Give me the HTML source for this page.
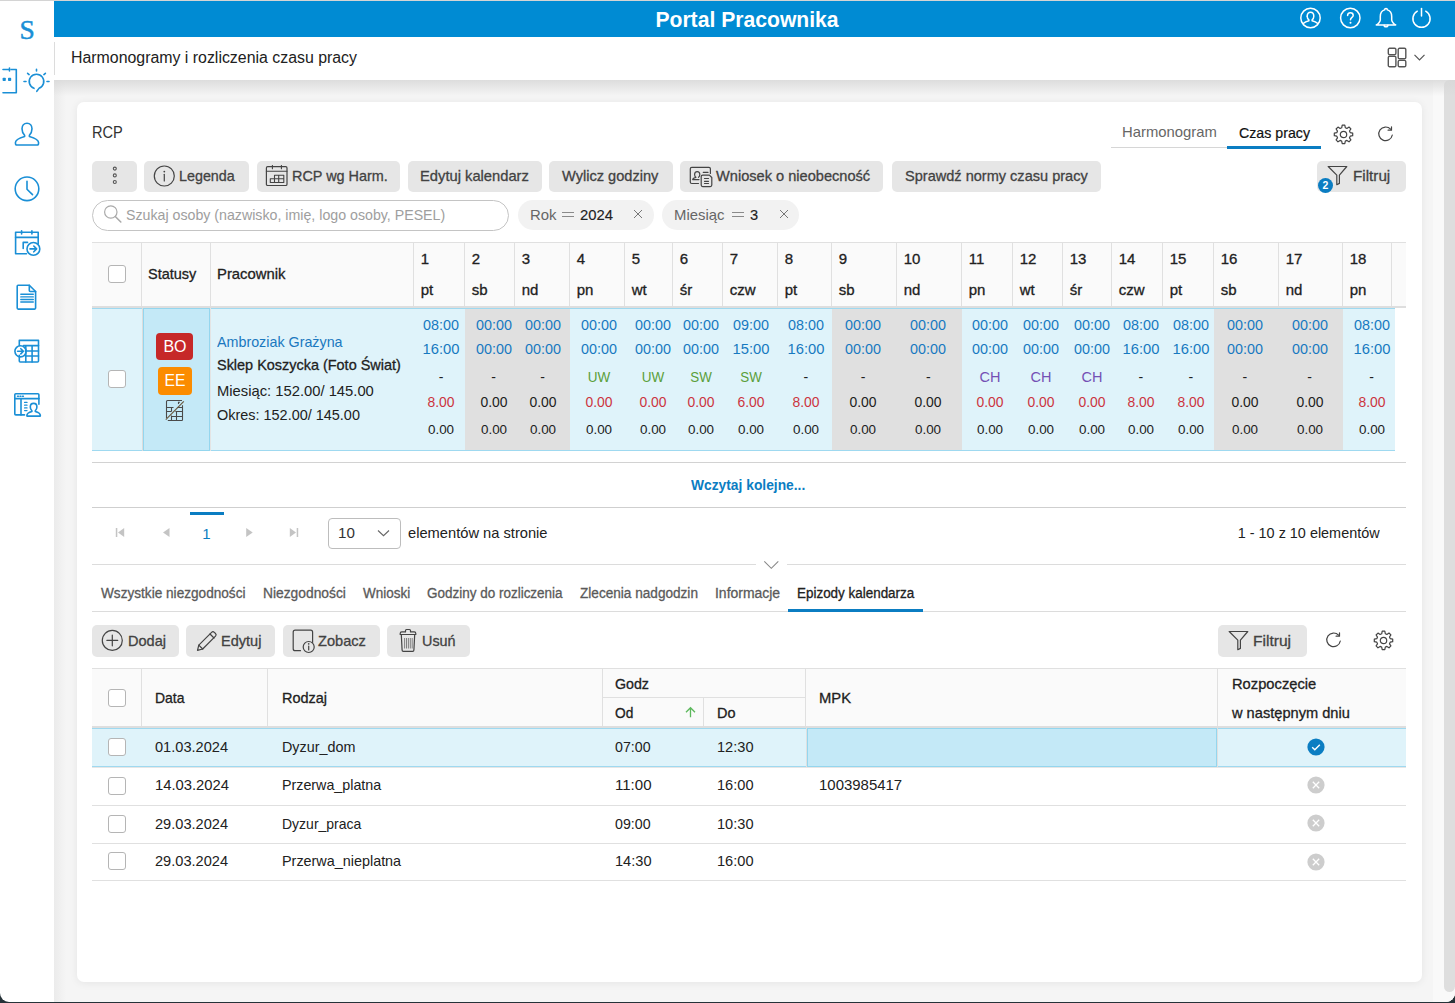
<!DOCTYPE html>
<html><head><meta charset="utf-8"><title>Portal Pracownika</title>
<style>
html,body{margin:0;padding:0;}
body{width:1455px;height:1003px;overflow:hidden;position:relative;background:#263238;font-family:"Liberation Sans", sans-serif;}
.t{position:absolute;line-height:1;white-space:nowrap;}
.t span{white-space:nowrap;}
</style></head><body>
<div style="position:absolute;left:0;top:0;width:1455px;height:1002px;background:#fff;border-radius:0 0 9px 9px;overflow:hidden;"><div style="position:absolute;left:0px;top:0px;width:1455px;height:1px;background:#d4d4d4;"></div><div style="position:absolute;left:54px;top:80px;width:1401px;height:922px;background:#f5f5f5;"></div><div style="position:absolute;left:54px;top:80px;width:12px;height:922px;background:linear-gradient(90deg,#ebebeb,#f5f5f5);"></div><div style="position:absolute;left:54px;top:1px;width:1401px;height:36px;background:#008bd3;"></div><div style="position:absolute;left:54px;top:37px;width:1401px;height:43px;background:#fff;"></div><div style="position:absolute;left:54px;top:42px;width:1px;height:33px;background:#dcdcdc;"></div><div style="position:absolute;left:1433px;top:80px;width:22px;height:922px;background:#f9f9f9;"></div><div style="position:absolute;left:1444px;top:80px;width:11px;height:912px;background:#dedede;border-radius:6px 0 6px 6px;"></div><div style="position:absolute;left:54px;top:80px;width:1401px;height:16px;background:linear-gradient(rgba(215,215,215,0.8),rgba(215,215,215,0));"></div><div style="position:absolute;left:77px;top:102px;width:1345px;height:880px;background:#fff;border-radius:7px;box-shadow:0 1px 8px rgba(0,0,0,0.07);"></div><div id="t0" class="t" style="left:747px;width:0;display:flex;justify-content:center;top:9.00px;font-size:22px;font-weight:700;color:#fff;transform:scaleX(0.9606);transform-origin:center;"><span>Portal Pracownika</span></div><svg style="position:absolute;left:1299px;top:7px;" width="23" height="23" viewBox="0 0 23 23"><g stroke="#fff" stroke-width="1.5" fill="none" stroke-linecap="round" stroke-linejoin="round"><circle cx="11.5" cy="11" r="9.7"/><path d="M8.2 9.2c0-2.4 1.4-4 3.3-4s3.3 1.6 3.3 4c0 1.7-.8 3-1.7 3.6v.9c2.2.6 4.3 1.6 5.3 2.6"/><path d="M8.2 9.2c0 1.7.8 3 1.7 3.6v.9c-2.2.6-4.3 1.6-5.3 2.6"/></g></svg><svg style="position:absolute;left:1339px;top:7px;" width="23" height="23" viewBox="0 0 23 23"><g stroke="#fff" stroke-width="1.5" fill="none" stroke-linecap="round" stroke-linejoin="round"><circle cx="11.3" cy="11" r="9.7"/><path d="M8.6 8.6c0-1.7 1.2-2.8 2.8-2.8s2.8 1.1 2.8 2.6c0 1.9-2.7 2.2-2.7 4.4"/></g><circle cx="11.5" cy="15.8" r="1" fill="#fff"/></svg><svg style="position:absolute;left:1374px;top:6px;" width="24" height="23" viewBox="0 0 24 23"><g stroke="#fff" stroke-width="1.5" fill="none" stroke-linecap="round" stroke-linejoin="round"><path d="M12 2.5c.9 0 1.4.6 1.4 1.4 3 .8 4.3 3.4 4.3 6.6v3.6c0 1.6 2.7 4.2 4 4.9H2.3c1.3-.7 4-3.3 4-4.9v-3.6c0-3.2 1.3-5.8 4.3-6.6 0-.8.5-1.4 1.4-1.4z"/><path d="M10.1 19.2c0 1 .8 1.6 1.9 1.6s1.9-.6 1.9-1.6"/></g></svg><svg style="position:absolute;left:1410px;top:6px;" width="23" height="23" viewBox="0 0 23 23"><g stroke="#fff" stroke-width="1.5" fill="none" stroke-linecap="round" stroke-linejoin="round"><path d="M7.3 5.2A8.6 8.6 0 1 0 15.7 5.2"/><path d="M11.5 2.5v7.6"/></g></svg><div id="t1" class="t" style="left:70.78px;top:50.00px;font-size:16px;font-weight:400;color:#212121;transform:scaleX(0.9927);transform-origin:left;"><span>Harmonogramy i rozliczenia czasu pracy</span></div><svg style="position:absolute;left:1387px;top:47px;" width="21" height="21" viewBox="0 0 21 21"><g stroke="#555" stroke-width="1.4" fill="none" stroke-linejoin="round"><rect x="1.3" y="1.3" width="7.6" height="6.3" rx="1.3"/><rect x="1.3" y="9.2" width="7.6" height="10.5" rx="1.3"/><rect x="11.2" y="1.3" width="7.6" height="10.4" rx="1.3"/><rect x="11.2" y="13.4" width="7.6" height="6.3" rx="1.3"/></g></svg><svg style="position:absolute;left:1413px;top:53px;" width="14" height="9" viewBox="0 0 14 9"><path d="M1.5 1.8l5 5 5-5" stroke="#555" stroke-width="1.2" fill="none"/></svg><div style="position:absolute;left:19.5px;top:16px;font-family:'Liberation Serif',serif;font-size:27.5px;color:#1a8fd6;line-height:1;-webkit-text-stroke:0.5px #1a8fd6;">S</div><svg style="position:absolute;left:0px;top:66px;" width="52" height="30" viewBox="0 0 52 30"><g stroke="#1a8fd6" stroke-width="1.6" fill="none" stroke-linecap="round" stroke-linejoin="round"><path d="M3 3.5h6.5M11.2 3.5h5.1v23.2H3M9.5 2v3"/><rect x="3.4" y="12.6" width="1.6" height="1.6"/><rect x="8.8" y="12.6" width="1.6" height="1.6"/><path d="M34 22.36A7.3 7.3 0 1 1 39 22.36L36.8 25.3"/><path d="M36.5 3.3v1.6M27.6 7.3l1.5 1.3M45.4 7.3l-1.5 1.3M24 15.5h2M47 15.5h2"/></g></svg><svg style="position:absolute;left:13px;top:121px;" width="28" height="28" viewBox="0 0 28 28"><g stroke="#1a8fd6" stroke-width="1.6" fill="none" stroke-linecap="round" stroke-linejoin="round"><path d="M14 2.2c-3 0-5 2.3-5 5.6 0 2.7 1.2 5 2.6 6.4v1.3c-4.8 1.4-9.2 3-9.2 6.2 0 1 .3 2 .8 2.3h21.6c.5-.3.8-1.3.8-2.3 0-3.2-4.4-4.8-9.2-6.2v-1.3c1.4-1.4 2.6-3.7 2.6-6.4 0-3.3-2-5.6-5-5.6z"/></g></svg><svg style="position:absolute;left:13px;top:175px;" width="28" height="28" viewBox="0 0 28 28"><g stroke="#1a8fd6" stroke-width="1.6" fill="none" stroke-linecap="round" stroke-linejoin="round"><circle cx="14" cy="13.8" r="11.8"/><path d="M14 6.2v8l5.5 5.4"/></g></svg><svg style="position:absolute;left:13px;top:229px;" width="30" height="29" viewBox="0 0 30 29"><g stroke="#1a8fd6" stroke-width="1.6" fill="none" stroke-linecap="round" stroke-linejoin="round"><path d="M13.5 24.7H2.6V3.2h22.6v11.5"/><path d="M2.6 8.4h22.6M8.6 1.8v3.2M18.9 1.8v3.2"/><path d="M10.2 19.5V13.4h4.3"/><circle cx="20.4" cy="19.9" r="6.4"/><path d="M17 19.9h6.5M20.8 17l2.8 2.9-2.8 2.9"/></g></svg><svg style="position:absolute;left:15px;top:283px;" width="25" height="28" viewBox="0 0 25 28"><g stroke="#1a8fd6" stroke-width="1.6" fill="none" stroke-linecap="round" stroke-linejoin="round"><path d="M3 2.2h11.3l6.3 6.3v16.6c0 .6-.4 1-1 1H3.2c-.6 0-1-.4-1-1V3.2c0-.6.4-1 .8-1z"/><path d="M14.3 2.2v5.3c0 .6.4 1 1 1h5.3"/><path d="M5.8 11.2h12.5M5.8 13.9h12.5M5.8 16.5h12.5M5.8 19h12.5" stroke-width="1.4"/></g></svg><svg style="position:absolute;left:13px;top:338px;" width="29" height="26" viewBox="0 0 29 26"><g stroke="#1a8fd6" stroke-width="1.6" fill="none" stroke-linecap="round" stroke-linejoin="round"><path d="M6.3 7.5V2.4h19.2v20.6c0 .6-.4 1-1 1H7.3c-.6 0-1-.4-1-1v-5.6"/><path d="M10.5 7.6h15M12.3 13h13.2M12.3 18h13.2M12.8 7.6v16.4M19.1 7.6v16.4"/><circle cx="7.5" cy="13.3" r="5.6"/><path d="M4.6 13.3h5.6M7.8 10.7l2.6 2.6-2.6 2.6"/></g></svg><svg style="position:absolute;left:13px;top:392px;" width="30" height="28" viewBox="0 0 30 28"><g stroke="#1a8fd6" stroke-width="1.6" fill="none" stroke-linecap="round" stroke-linejoin="round"><path d="M11.5 22.9H2.8c-.6 0-1-.4-1-1V2.8c0-.6.4-1 1-1h22.1c.6 0 1 .4 1 1v9.5"/><path d="M1.8 6.6h24.1M8 6.6v16.3"/><path d="M4.5 4.2h.9M7 4.2h.9M9.5 4.2h.9" stroke-width="1.5"/><path d="M11.6 10.4h2.4M11.6 13.2h2.4M11.6 15.9h2.4M11.6 18.6h2.4" stroke-width="1.3"/><path d="M20.5 11.4c-1.9 0-3.2 1.5-3.2 3.5 0 1.7.7 3 1.6 3.9v.6c-2.6.7-5 1.7-5 3.8v.9h13.4v-.9c0-2.1-2.4-3.1-5-3.8v-.6c.9-.9 1.6-2.2 1.6-3.9 0-2-1.3-3.5-3.2-3.5z"/></g></svg><div id="t2" class="t" style="left:92.28px;top:125.00px;font-size:16px;font-weight:400;color:#333;transform:scaleX(0.9125);transform-origin:left;"><span>RCP</span></div><div style="position:absolute;left:1111px;top:147px;width:116px;height:1px;background:#d6d6d6;"></div><div style="position:absolute;left:1227px;top:146px;width:94px;height:2.5px;background:#0b7dc2;"></div><div id="t3" class="t" style="left:1121.55px;top:124.00px;font-size:15px;font-weight:400;color:#666;transform:scaleX(0.9897);transform-origin:left;"><span>Harmonogram</span></div><div id="t4" class="t" style="left:1238.75px;top:125.00px;font-size:15px;font-weight:400;color:#111;transform:scaleX(0.9467);transform-origin:left;-webkit-text-stroke:0.2px currentColor;"><span>Czas pracy</span></div><svg style="position:absolute;left:1333px;top:124px;" width="21" height="21" viewBox="0 0 21 21"><g stroke="#444" stroke-width="1.2" fill="none" stroke-linecap="round" stroke-linejoin="round"><path d="M9.2 1.2h2.6l.5 2.5 1.6.7 2.1-1.4 1.9 1.9-1.4 2.1.7 1.6 2.5.5v2.6l-2.5.5-.7 1.6 1.4 2.1-1.9 1.9-2.1-1.4-1.6.7-.5 2.5H9.2l-.5-2.5-1.6-.7-2.1 1.4-1.9-1.9 1.4-2.1-.7-1.6-2.5-.5V9.2l2.5-.5.7-1.6-1.4-2.1 1.9-1.9 2.1 1.4 1.6-.7z"/><circle cx="10.5" cy="10.5" r="3.2"/></g></svg><svg style="position:absolute;left:1377px;top:126px;" width="17" height="17" viewBox="0 0 17 17"><g stroke="#444" stroke-width="1.2" fill="none" stroke-linecap="round" stroke-linejoin="round"><path d="M13.6 3.2A6.8 6.8 0 1 0 15.3 9"/><path d="M14.5 .8v3.4h-3.4" /></g></svg><div style="position:absolute;left:92px;top:161px;width:45px;height:31px;background:#e6e6e6;border-radius:5px;"></div><svg style="position:absolute;left:110px;top:163px;" width="10" height="24" viewBox="0 0 10 24"><g stroke="#555" stroke-width="1.1" fill="none"><circle cx="4.8" cy="5.6" r="1.5"/><circle cx="4.8" cy="12.4" r="1.5"/><circle cx="4.8" cy="19" r="1.5"/></g></svg><div style="position:absolute;left:144px;top:161px;width:105px;height:31px;background:#e6e6e6;border-radius:5px;"></div><svg style="position:absolute;left:153px;top:165px;" width="23" height="23" viewBox="0 0 23 23"><g stroke="#444" stroke-width="1.2" fill="none" stroke-linecap="round" stroke-linejoin="round"><circle cx="11.3" cy="11" r="10"/><path d="M11.3 9.3v6.6"/></g><circle cx="11.3" cy="6.6" r=".9" fill="#444"/></svg><div id="t5" class="t" style="left:179.25px;top:168.00px;font-size:15px;font-weight:400;color:#424242;transform:scaleX(0.9543);transform-origin:left;-webkit-text-stroke:0.3px currentColor;"><span>Legenda</span></div><div style="position:absolute;left:257px;top:161px;width:143px;height:31px;background:#e6e6e6;border-radius:5px;"></div><svg style="position:absolute;left:265px;top:165px;" width="24" height="22" viewBox="0 0 24 22"><g stroke="#444" stroke-width="1.2" fill="none" stroke-linecap="round" stroke-linejoin="round"><rect x="1.4" y="1.6" width="20.6" height="18.9" rx="1.3"/><path d="M1.4 6.2h20.6M7.4 0.4v3.4M16.4 0.4v3.4M5.3 17.5V13.8H9.5V10.3H18.8V17.5zM5.3 13.8H18.8M9.5 13.8V17.5M13.7 10.3V17.5" stroke-width="1.1"/></g></svg><div id="t6" class="t" style="left:291.65px;top:168.00px;font-size:15px;font-weight:400;color:#424242;transform:scaleX(0.9607);transform-origin:left;-webkit-text-stroke:0.3px currentColor;"><span>RCP wg Harm.</span></div><div style="position:absolute;left:408px;top:161px;width:134px;height:31px;background:#e6e6e6;border-radius:5px;"></div><div id="t7" class="t" style="left:419.95px;top:168.00px;font-size:15px;font-weight:400;color:#424242;transform:scaleX(0.9818);transform-origin:left;-webkit-text-stroke:0.3px currentColor;"><span>Edytuj kalendarz</span></div><div style="position:absolute;left:549px;top:161px;width:124px;height:31px;background:#e6e6e6;border-radius:5px;"></div><div id="t8" class="t" style="left:561.95px;top:168.00px;font-size:15px;font-weight:400;color:#424242;transform:scaleX(0.9723);transform-origin:left;-webkit-text-stroke:0.3px currentColor;"><span>Wylicz godziny</span></div><div style="position:absolute;left:680px;top:161px;width:203px;height:31px;background:#e6e6e6;border-radius:5px;"></div><svg style="position:absolute;left:689px;top:165px;" width="25" height="23" viewBox="0 0 25 23"><g stroke="#444" stroke-width="1.2" fill="none" stroke-linecap="round" stroke-linejoin="round"><path d="M9.5 18.5H2.8c-.8 0-1.5-.7-1.5-1.5V3.8c0-.8.7-1.5 1.5-1.5h17.1c.8 0 1.5.7 1.5 1.5v4.7"/><path d="M6.9 12.3c-.9-.6-1.3-1.6-1.3-2.8 0-1.6 1.1-2.9 2.6-2.9s2.6 1.3 2.6 2.9c0 1.2-.4 2.2-1.3 2.8M6.9 12.3c-1.7.4-3.2 1.1-3.2 2.3h6.3M14.3 7.4h4.7"/><path d="M13.7 10.1h6.7l2.4 2.4v7.6c0 .8-.7 1.5-1.5 1.5h-7.6c-.8 0-1.5-.7-1.5-1.5v-8.5c0-.8.7-1.5 1.5-1.5z" fill="#e6e6e6"/><path d="M15.5 13.5h4M15.5 16.3h4M15.5 18.5h4"/></g></svg><div id="t9" class="t" style="left:716.15px;top:168.00px;font-size:15px;font-weight:400;color:#424242;transform:scaleX(0.9728);transform-origin:left;-webkit-text-stroke:0.3px currentColor;"><span>Wniosek o nieobecność</span></div><div style="position:absolute;left:892px;top:161px;width:209px;height:31px;background:#e6e6e6;border-radius:5px;"></div><div id="t10" class="t" style="left:904.75px;top:168.00px;font-size:15px;font-weight:400;color:#424242;transform:scaleX(0.9698);transform-origin:left;-webkit-text-stroke:0.3px currentColor;"><span>Sprawdź normy czasu pracy</span></div><div style="position:absolute;left:1317px;top:161px;width:89px;height:31px;background:#e6e6e6;border-radius:5px;"></div><svg style="position:absolute;left:1327px;top:165px;" width="22" height="22" viewBox="0 0 22 22"><g stroke="#444" stroke-width="1.2" fill="none" stroke-linecap="round" stroke-linejoin="round"><path d="M1.2 1.5h18.6l-7.4 8.6v8.3l-2.6 1.3v-9.6z"/></g></svg><div id="t11" class="t" style="left:1352.55px;top:168.00px;font-size:15px;font-weight:400;color:#424242;transform:scaleX(1.0161);transform-origin:left;-webkit-text-stroke:0.3px currentColor;"><span>Filtruj</span></div><div style="position:absolute;left:1317.9px;top:177.5px;width:15px;height:15px;border-radius:50%;background:#0b7dc2;color:#fff;font-size:10.5px;font-weight:700;line-height:15px;text-align:center;">2</div><div style="position:absolute;left:92px;top:200px;width:417px;height:31px;box-sizing:border-box;border:1px solid #c4c4c4;border-radius:16px;"></div><svg style="position:absolute;left:103px;top:204px;" width="20" height="20" viewBox="0 0 20 20"><g stroke="#aaa" stroke-width="1.2" fill="none" stroke-linecap="round"><circle cx="7.8" cy="8" r="6.2"/><path d="M12.3 12.5l5.5 5.5" stroke-width="1.6"/></g></svg><div id="t12" class="t" style="left:126.35px;top:207.00px;font-size:15px;font-weight:400;color:#9e9e9e;transform:scaleX(0.9461);transform-origin:left;"><span>Szukaj osoby (nazwisko, imię, logo osoby, PESEL)</span></div><div style="position:absolute;left:518px;top:200px;width:136px;height:30px;background:#f2f2f2;border-radius:15px;"></div><div id="t13" class="t" style="left:529.95px;top:207.00px;font-size:15px;font-weight:400;color:#666;transform:scaleX(0.9933);transform-origin:left;"><span>Rok</span></div><div style="position:absolute;left:562px;top:212px;width:11.5px;height:1px;background:#8a8a8a;"></div><div style="position:absolute;left:562px;top:216px;width:11.5px;height:1px;background:#8a8a8a;"></div><div id="t14" class="t" style="left:580.25px;top:207.00px;font-size:15px;font-weight:400;color:#222;transform:scaleX(0.9871);transform-origin:left;-webkit-text-stroke:0.15px currentColor;"><span>2024</span></div><svg style="position:absolute;left:632px;top:208px;" width="12" height="12" viewBox="0 0 12 12"><path d="M2 2l8 8M10 2l-8 8" stroke="#777" stroke-width="1"/></svg><div style="position:absolute;left:662px;top:200px;width:137px;height:30px;background:#f2f2f2;border-radius:15px;"></div><div id="t15" class="t" style="left:674.25px;top:207.00px;font-size:15px;font-weight:400;color:#666;transform:scaleX(0.9912);transform-origin:left;"><span>Miesiąc</span></div><div style="position:absolute;left:732px;top:212px;width:12px;height:1px;background:#8a8a8a;"></div><div style="position:absolute;left:732px;top:216px;width:12px;height:1px;background:#8a8a8a;"></div><div id="t16" class="t" style="left:750.45px;top:207.00px;font-size:15px;font-weight:400;color:#222;transform:scaleX(0.9750);transform-origin:left;-webkit-text-stroke:0.15px currentColor;"><span>3</span></div><svg style="position:absolute;left:777.5px;top:208px;" width="12" height="12" viewBox="0 0 12 12"><path d="M2 2l8 8M10 2l-8 8" stroke="#777" stroke-width="1"/></svg><div style="position:absolute;left:92px;top:242px;width:1314px;height:1px;background:#e0e0e0;"></div><div style="position:absolute;left:92px;top:243px;width:1314px;height:63px;background:#fafafa;"></div><div style="position:absolute;left:92px;top:306px;width:1314px;height:2px;background:#dedede;"></div><div style="position:absolute;left:141px;top:243px;width:1px;height:63px;background:#e0e0e0;"></div><div style="position:absolute;left:210px;top:243px;width:1px;height:63px;background:#e0e0e0;"></div><div style="position:absolute;left:413px;top:243px;width:1px;height:63px;background:#e0e0e0;"></div><div style="position:absolute;left:464px;top:243px;width:1px;height:63px;background:#e0e0e0;"></div><div style="position:absolute;left:514px;top:243px;width:1px;height:63px;background:#e0e0e0;"></div><div style="position:absolute;left:569px;top:243px;width:1px;height:63px;background:#e0e0e0;"></div><div style="position:absolute;left:624px;top:243px;width:1px;height:63px;background:#e0e0e0;"></div><div style="position:absolute;left:672px;top:243px;width:1px;height:63px;background:#e0e0e0;"></div><div style="position:absolute;left:722px;top:243px;width:1px;height:63px;background:#e0e0e0;"></div><div style="position:absolute;left:777px;top:243px;width:1px;height:63px;background:#e0e0e0;"></div><div style="position:absolute;left:831px;top:243px;width:1px;height:63px;background:#e0e0e0;"></div><div style="position:absolute;left:896px;top:243px;width:1px;height:63px;background:#e0e0e0;"></div><div style="position:absolute;left:961px;top:243px;width:1px;height:63px;background:#e0e0e0;"></div><div style="position:absolute;left:1012px;top:243px;width:1px;height:63px;background:#e0e0e0;"></div><div style="position:absolute;left:1062px;top:243px;width:1px;height:63px;background:#e0e0e0;"></div><div style="position:absolute;left:1111px;top:243px;width:1px;height:63px;background:#e0e0e0;"></div><div style="position:absolute;left:1162px;top:243px;width:1px;height:63px;background:#e0e0e0;"></div><div style="position:absolute;left:1213px;top:243px;width:1px;height:63px;background:#e0e0e0;"></div><div style="position:absolute;left:1278px;top:243px;width:1px;height:63px;background:#e0e0e0;"></div><div style="position:absolute;left:1342px;top:243px;width:1px;height:63px;background:#e0e0e0;"></div><div style="position:absolute;left:1391px;top:243px;width:1px;height:63px;background:#e0e0e0;"></div><div style="position:absolute;left:108px;top:265px;width:18px;height:18px;box-sizing:border-box;border:1px solid #b5b5b5;border-radius:3px;background:#fff;"></div><div id="t17" class="t" style="left:147.85px;top:266.00px;font-size:15px;font-weight:400;color:#212121;transform:scaleX(0.9659);transform-origin:left;-webkit-text-stroke:0.3px currentColor;"><span>Statusy</span></div><div id="t18" class="t" style="left:217.25px;top:266.00px;font-size:15px;font-weight:400;color:#212121;transform:scaleX(0.9899);transform-origin:left;-webkit-text-stroke:0.3px currentColor;"><span>Pracownik</span></div><div id="t19" class="t" style="left:420.75px;top:251.00px;font-size:15px;font-weight:400;color:#212121;-webkit-text-stroke:0.3px currentColor;"><span>1</span></div><div id="t20" class="t" style="left:420.75px;top:282.00px;font-size:15px;font-weight:400;color:#212121;-webkit-text-stroke:0.3px currentColor;"><span>pt</span></div><div id="t21" class="t" style="left:471.75px;top:251.00px;font-size:15px;font-weight:400;color:#212121;-webkit-text-stroke:0.3px currentColor;"><span>2</span></div><div id="t22" class="t" style="left:471.75px;top:282.00px;font-size:15px;font-weight:400;color:#212121;-webkit-text-stroke:0.3px currentColor;"><span>sb</span></div><div id="t23" class="t" style="left:521.75px;top:251.00px;font-size:15px;font-weight:400;color:#212121;-webkit-text-stroke:0.3px currentColor;"><span>3</span></div><div id="t24" class="t" style="left:521.75px;top:282.00px;font-size:15px;font-weight:400;color:#212121;-webkit-text-stroke:0.3px currentColor;"><span>nd</span></div><div id="t25" class="t" style="left:576.75px;top:251.00px;font-size:15px;font-weight:400;color:#212121;-webkit-text-stroke:0.3px currentColor;"><span>4</span></div><div id="t26" class="t" style="left:576.75px;top:282.00px;font-size:15px;font-weight:400;color:#212121;-webkit-text-stroke:0.3px currentColor;"><span>pn</span></div><div id="t27" class="t" style="left:631.75px;top:251.00px;font-size:15px;font-weight:400;color:#212121;-webkit-text-stroke:0.3px currentColor;"><span>5</span></div><div id="t28" class="t" style="left:631.75px;top:282.00px;font-size:15px;font-weight:400;color:#212121;-webkit-text-stroke:0.3px currentColor;"><span>wt</span></div><div id="t29" class="t" style="left:679.75px;top:251.00px;font-size:15px;font-weight:400;color:#212121;-webkit-text-stroke:0.3px currentColor;"><span>6</span></div><div id="t30" class="t" style="left:679.75px;top:282.00px;font-size:15px;font-weight:400;color:#212121;-webkit-text-stroke:0.3px currentColor;"><span>śr</span></div><div id="t31" class="t" style="left:729.75px;top:251.00px;font-size:15px;font-weight:400;color:#212121;-webkit-text-stroke:0.3px currentColor;"><span>7</span></div><div id="t32" class="t" style="left:729.75px;top:282.00px;font-size:15px;font-weight:400;color:#212121;-webkit-text-stroke:0.3px currentColor;"><span>czw</span></div><div id="t33" class="t" style="left:784.75px;top:251.00px;font-size:15px;font-weight:400;color:#212121;-webkit-text-stroke:0.3px currentColor;"><span>8</span></div><div id="t34" class="t" style="left:784.75px;top:282.00px;font-size:15px;font-weight:400;color:#212121;-webkit-text-stroke:0.3px currentColor;"><span>pt</span></div><div id="t35" class="t" style="left:838.75px;top:251.00px;font-size:15px;font-weight:400;color:#212121;-webkit-text-stroke:0.3px currentColor;"><span>9</span></div><div id="t36" class="t" style="left:838.75px;top:282.00px;font-size:15px;font-weight:400;color:#212121;-webkit-text-stroke:0.3px currentColor;"><span>sb</span></div><div id="t37" class="t" style="left:903.75px;top:251.00px;font-size:15px;font-weight:400;color:#212121;-webkit-text-stroke:0.3px currentColor;"><span>10</span></div><div id="t38" class="t" style="left:903.75px;top:282.00px;font-size:15px;font-weight:400;color:#212121;-webkit-text-stroke:0.3px currentColor;"><span>nd</span></div><div id="t39" class="t" style="left:968.75px;top:251.00px;font-size:15px;font-weight:400;color:#212121;-webkit-text-stroke:0.3px currentColor;"><span>11</span></div><div id="t40" class="t" style="left:968.75px;top:282.00px;font-size:15px;font-weight:400;color:#212121;-webkit-text-stroke:0.3px currentColor;"><span>pn</span></div><div id="t41" class="t" style="left:1019.75px;top:251.00px;font-size:15px;font-weight:400;color:#212121;-webkit-text-stroke:0.3px currentColor;"><span>12</span></div><div id="t42" class="t" style="left:1019.75px;top:282.00px;font-size:15px;font-weight:400;color:#212121;-webkit-text-stroke:0.3px currentColor;"><span>wt</span></div><div id="t43" class="t" style="left:1069.75px;top:251.00px;font-size:15px;font-weight:400;color:#212121;-webkit-text-stroke:0.3px currentColor;"><span>13</span></div><div id="t44" class="t" style="left:1069.75px;top:282.00px;font-size:15px;font-weight:400;color:#212121;-webkit-text-stroke:0.3px currentColor;"><span>śr</span></div><div id="t45" class="t" style="left:1118.75px;top:251.00px;font-size:15px;font-weight:400;color:#212121;-webkit-text-stroke:0.3px currentColor;"><span>14</span></div><div id="t46" class="t" style="left:1118.75px;top:282.00px;font-size:15px;font-weight:400;color:#212121;-webkit-text-stroke:0.3px currentColor;"><span>czw</span></div><div id="t47" class="t" style="left:1169.75px;top:251.00px;font-size:15px;font-weight:400;color:#212121;-webkit-text-stroke:0.3px currentColor;"><span>15</span></div><div id="t48" class="t" style="left:1169.75px;top:282.00px;font-size:15px;font-weight:400;color:#212121;-webkit-text-stroke:0.3px currentColor;"><span>pt</span></div><div id="t49" class="t" style="left:1220.75px;top:251.00px;font-size:15px;font-weight:400;color:#212121;-webkit-text-stroke:0.3px currentColor;"><span>16</span></div><div id="t50" class="t" style="left:1220.75px;top:282.00px;font-size:15px;font-weight:400;color:#212121;-webkit-text-stroke:0.3px currentColor;"><span>sb</span></div><div id="t51" class="t" style="left:1285.75px;top:251.00px;font-size:15px;font-weight:400;color:#212121;-webkit-text-stroke:0.3px currentColor;"><span>17</span></div><div id="t52" class="t" style="left:1285.75px;top:282.00px;font-size:15px;font-weight:400;color:#212121;-webkit-text-stroke:0.3px currentColor;"><span>nd</span></div><div id="t53" class="t" style="left:1349.75px;top:251.00px;font-size:15px;font-weight:400;color:#212121;-webkit-text-stroke:0.3px currentColor;"><span>18</span></div><div id="t54" class="t" style="left:1349.75px;top:282.00px;font-size:15px;font-weight:400;color:#212121;-webkit-text-stroke:0.3px currentColor;"><span>pn</span></div><div style="position:absolute;left:92px;top:308px;width:1303px;height:143px;background:#dff3fa;"></div><div style="position:absolute;left:92px;top:308px;width:1303px;height:1px;background:#9fd9f0;"></div><div style="position:absolute;left:92px;top:450px;width:1303px;height:1px;background:#9fd9f0;"></div><div style="position:absolute;left:142px;top:308px;width:1px;height:143px;background:#dcdcdc;"></div><div style="position:absolute;left:143px;top:308px;width:67px;height:143px;box-sizing:border-box;background:#c4e9f7;border:1px solid #94d6ee;"></div><div style="position:absolute;left:210px;top:308px;width:1px;height:143px;background:#e4e4e4;"></div><div style="position:absolute;left:465px;top:309px;width:105px;height:141px;background:#e0e0e0;"></div><div style="position:absolute;left:832px;top:309px;width:130px;height:141px;background:#e0e0e0;"></div><div style="position:absolute;left:1214px;top:309px;width:129px;height:141px;background:#e0e0e0;"></div><div style="position:absolute;left:108px;top:370px;width:18px;height:18px;box-sizing:border-box;border:1px solid #b5b5b5;border-radius:3px;background:#fff;"></div><div style="position:absolute;left:156px;top:333px;width:37px;height:27px;background:#c62828;border-radius:4px;"></div><div id="t55" class="t" style="left:174.9px;width:0;display:flex;justify-content:center;top:338.00px;font-size:17px;font-weight:400;color:#fff;transform:scaleX(0.9426);transform-origin:center;"><span>BO</span></div><div style="position:absolute;left:158px;top:367px;width:34px;height:28px;background:#fb8c00;border-radius:4px;"></div><div id="t56" class="t" style="left:175.1px;width:0;display:flex;justify-content:center;top:372.00px;font-size:17px;font-weight:400;color:#fff;transform:scaleX(0.9232);transform-origin:center;"><span>EE</span></div><svg style="position:absolute;left:164px;top:398px;" width="22" height="25" viewBox="0 0 22 25"><g stroke="#4a4a4a" stroke-width="1.1" fill="none"><path d="M18 2.5H3.5c-.6 0-1 .4-1 1v16.4M3.8 22.5h14c.4 0 .7-.3.7-.7V7.3M2.5 9.5h7M13.2 9.5h5.3M2.5 13.5h5M11.4 13.5h7.1M7.5 9.5v4M12.5 13.5v9M7.5 17.6v4.9M7.5 18.5h11M14.5 6V4.3h1.4"/><path d="M1.8 21.7L19.8 3.3" stroke="#6a5a40" stroke-width="1.2"/></g></svg><div id="t57" class="t" style="left:216.55px;top:334.00px;font-size:15px;font-weight:400;color:#1a78bf;transform:scaleX(0.9534);transform-origin:left;"><span>Ambroziak Grażyna</span></div><div id="t58" class="t" style="left:216.55px;top:357.00px;font-size:15px;font-weight:400;color:#212121;transform:scaleX(0.9628);transform-origin:left;-webkit-text-stroke:0.3px currentColor;"><span>Sklep Koszycka (Foto Świat)</span></div><div id="t59" class="t" style="left:216.55px;top:383.00px;font-size:15px;font-weight:400;color:#212121;transform:scaleX(0.9846);transform-origin:left;"><span>Miesiąc: 152.00/ 145.00</span></div><div id="t60" class="t" style="left:216.55px;top:407.00px;font-size:15px;font-weight:400;color:#212121;transform:scaleX(0.9629);transform-origin:left;"><span>Okres: 152.00/ 145.00</span></div><div id="t61" class="t" style="left:441px;width:0;display:flex;justify-content:center;top:317.00px;font-size:15px;font-weight:400;color:#1679c0;transform:scaleX(0.9571);transform-origin:center;"><span>08:00</span></div><div id="t62" class="t" style="left:441px;width:0;display:flex;justify-content:center;top:341.00px;font-size:15px;font-weight:400;color:#1679c0;transform:scaleX(0.9836);transform-origin:center;"><span>16:00</span></div><div id="t63" class="t" style="left:441px;width:0;display:flex;justify-content:center;top:370.00px;font-size:14px;font-weight:400;color:#212121;"><span>-</span></div><div id="t64" class="t" style="left:441px;width:0;display:flex;justify-content:center;top:395.00px;font-size:14px;font-weight:400;color:#cc3340;transform:scaleX(0.9941);transform-origin:center;"><span>8.00</span></div><div id="t65" class="t" style="left:441px;width:0;display:flex;justify-content:center;top:423.00px;font-size:13.5px;font-weight:400;color:#212121;transform:scaleX(0.9935);transform-origin:center;"><span>0.00</span></div><div id="t66" class="t" style="left:493.6px;width:0;display:flex;justify-content:center;top:317.00px;font-size:15px;font-weight:400;color:#1679c0;transform:scaleX(0.9571);transform-origin:center;"><span>00:00</span></div><div id="t67" class="t" style="left:493.6px;width:0;display:flex;justify-content:center;top:341.00px;font-size:15px;font-weight:400;color:#1679c0;transform:scaleX(0.9571);transform-origin:center;"><span>00:00</span></div><div id="t68" class="t" style="left:493.6px;width:0;display:flex;justify-content:center;top:370.00px;font-size:14px;font-weight:400;color:#212121;"><span>-</span></div><div id="t69" class="t" style="left:493.6px;width:0;display:flex;justify-content:center;top:395.00px;font-size:14px;font-weight:400;color:#212121;transform:scaleX(0.9941);transform-origin:center;"><span>0.00</span></div><div id="t70" class="t" style="left:493.6px;width:0;display:flex;justify-content:center;top:423.00px;font-size:13.5px;font-weight:400;color:#212121;transform:scaleX(0.9935);transform-origin:center;"><span>0.00</span></div><div id="t71" class="t" style="left:542.5px;width:0;display:flex;justify-content:center;top:317.00px;font-size:15px;font-weight:400;color:#1679c0;transform:scaleX(0.9571);transform-origin:center;"><span>00:00</span></div><div id="t72" class="t" style="left:542.5px;width:0;display:flex;justify-content:center;top:341.00px;font-size:15px;font-weight:400;color:#1679c0;transform:scaleX(0.9571);transform-origin:center;"><span>00:00</span></div><div id="t73" class="t" style="left:542.5px;width:0;display:flex;justify-content:center;top:370.00px;font-size:14px;font-weight:400;color:#212121;"><span>-</span></div><div id="t74" class="t" style="left:542.5px;width:0;display:flex;justify-content:center;top:395.00px;font-size:14px;font-weight:400;color:#212121;transform:scaleX(0.9941);transform-origin:center;"><span>0.00</span></div><div id="t75" class="t" style="left:542.5px;width:0;display:flex;justify-content:center;top:423.00px;font-size:13.5px;font-weight:400;color:#212121;transform:scaleX(0.9935);transform-origin:center;"><span>0.00</span></div><div id="t76" class="t" style="left:598.5px;width:0;display:flex;justify-content:center;top:317.00px;font-size:15px;font-weight:400;color:#1679c0;transform:scaleX(0.9571);transform-origin:center;"><span>00:00</span></div><div id="t77" class="t" style="left:598.5px;width:0;display:flex;justify-content:center;top:341.00px;font-size:15px;font-weight:400;color:#1679c0;transform:scaleX(0.9571);transform-origin:center;"><span>00:00</span></div><div id="t78" class="t" style="left:598.5px;width:0;display:flex;justify-content:center;top:370.00px;font-size:14px;font-weight:400;color:#5b9f3b;transform:scaleX(0.9649);transform-origin:center;"><span>UW</span></div><div id="t79" class="t" style="left:598.5px;width:0;display:flex;justify-content:center;top:395.00px;font-size:14px;font-weight:400;color:#cc3340;transform:scaleX(0.9941);transform-origin:center;"><span>0.00</span></div><div id="t80" class="t" style="left:598.5px;width:0;display:flex;justify-content:center;top:423.00px;font-size:13.5px;font-weight:400;color:#212121;transform:scaleX(0.9935);transform-origin:center;"><span>0.00</span></div><div id="t81" class="t" style="left:653px;width:0;display:flex;justify-content:center;top:317.00px;font-size:15px;font-weight:400;color:#1679c0;transform:scaleX(0.9571);transform-origin:center;"><span>00:00</span></div><div id="t82" class="t" style="left:653px;width:0;display:flex;justify-content:center;top:341.00px;font-size:15px;font-weight:400;color:#1679c0;transform:scaleX(0.9571);transform-origin:center;"><span>00:00</span></div><div id="t83" class="t" style="left:653px;width:0;display:flex;justify-content:center;top:370.00px;font-size:14px;font-weight:400;color:#5b9f3b;transform:scaleX(0.9649);transform-origin:center;"><span>UW</span></div><div id="t84" class="t" style="left:653px;width:0;display:flex;justify-content:center;top:395.00px;font-size:14px;font-weight:400;color:#cc3340;transform:scaleX(0.9941);transform-origin:center;"><span>0.00</span></div><div id="t85" class="t" style="left:653px;width:0;display:flex;justify-content:center;top:423.00px;font-size:13.5px;font-weight:400;color:#212121;transform:scaleX(0.9935);transform-origin:center;"><span>0.00</span></div><div id="t86" class="t" style="left:701.2px;width:0;display:flex;justify-content:center;top:317.00px;font-size:15px;font-weight:400;color:#1679c0;transform:scaleX(0.9571);transform-origin:center;"><span>00:00</span></div><div id="t87" class="t" style="left:701.2px;width:0;display:flex;justify-content:center;top:341.00px;font-size:15px;font-weight:400;color:#1679c0;transform:scaleX(0.9571);transform-origin:center;"><span>00:00</span></div><div id="t88" class="t" style="left:701.2px;width:0;display:flex;justify-content:center;top:370.00px;font-size:14px;font-weight:400;color:#5b9f3b;transform:scaleX(0.9555);transform-origin:center;"><span>SW</span></div><div id="t89" class="t" style="left:701.2px;width:0;display:flex;justify-content:center;top:395.00px;font-size:14px;font-weight:400;color:#cc3340;transform:scaleX(0.9941);transform-origin:center;"><span>0.00</span></div><div id="t90" class="t" style="left:701.2px;width:0;display:flex;justify-content:center;top:423.00px;font-size:13.5px;font-weight:400;color:#212121;transform:scaleX(0.9935);transform-origin:center;"><span>0.00</span></div><div id="t91" class="t" style="left:751.2px;width:0;display:flex;justify-content:center;top:317.00px;font-size:15px;font-weight:400;color:#1679c0;transform:scaleX(0.9571);transform-origin:center;"><span>09:00</span></div><div id="t92" class="t" style="left:751.2px;width:0;display:flex;justify-content:center;top:341.00px;font-size:15px;font-weight:400;color:#1679c0;transform:scaleX(0.9836);transform-origin:center;"><span>15:00</span></div><div id="t93" class="t" style="left:751.2px;width:0;display:flex;justify-content:center;top:370.00px;font-size:14px;font-weight:400;color:#5b9f3b;transform:scaleX(0.9555);transform-origin:center;"><span>SW</span></div><div id="t94" class="t" style="left:751.2px;width:0;display:flex;justify-content:center;top:395.00px;font-size:14px;font-weight:400;color:#cc3340;transform:scaleX(0.9941);transform-origin:center;"><span>6.00</span></div><div id="t95" class="t" style="left:751.2px;width:0;display:flex;justify-content:center;top:423.00px;font-size:13.5px;font-weight:400;color:#212121;transform:scaleX(0.9935);transform-origin:center;"><span>0.00</span></div><div id="t96" class="t" style="left:805.9px;width:0;display:flex;justify-content:center;top:317.00px;font-size:15px;font-weight:400;color:#1679c0;transform:scaleX(0.9571);transform-origin:center;"><span>08:00</span></div><div id="t97" class="t" style="left:805.9px;width:0;display:flex;justify-content:center;top:341.00px;font-size:15px;font-weight:400;color:#1679c0;transform:scaleX(0.9836);transform-origin:center;"><span>16:00</span></div><div id="t98" class="t" style="left:805.9px;width:0;display:flex;justify-content:center;top:370.00px;font-size:14px;font-weight:400;color:#212121;"><span>-</span></div><div id="t99" class="t" style="left:805.9px;width:0;display:flex;justify-content:center;top:395.00px;font-size:14px;font-weight:400;color:#cc3340;transform:scaleX(0.9941);transform-origin:center;"><span>8.00</span></div><div id="t100" class="t" style="left:805.9px;width:0;display:flex;justify-content:center;top:423.00px;font-size:13.5px;font-weight:400;color:#212121;transform:scaleX(0.9935);transform-origin:center;"><span>0.00</span></div><div id="t101" class="t" style="left:863.1px;width:0;display:flex;justify-content:center;top:317.00px;font-size:15px;font-weight:400;color:#1679c0;transform:scaleX(0.9571);transform-origin:center;"><span>00:00</span></div><div id="t102" class="t" style="left:863.1px;width:0;display:flex;justify-content:center;top:341.00px;font-size:15px;font-weight:400;color:#1679c0;transform:scaleX(0.9571);transform-origin:center;"><span>00:00</span></div><div id="t103" class="t" style="left:863.1px;width:0;display:flex;justify-content:center;top:370.00px;font-size:14px;font-weight:400;color:#212121;"><span>-</span></div><div id="t104" class="t" style="left:863.1px;width:0;display:flex;justify-content:center;top:395.00px;font-size:14px;font-weight:400;color:#212121;transform:scaleX(0.9941);transform-origin:center;"><span>0.00</span></div><div id="t105" class="t" style="left:863.1px;width:0;display:flex;justify-content:center;top:423.00px;font-size:13.5px;font-weight:400;color:#212121;transform:scaleX(0.9935);transform-origin:center;"><span>0.00</span></div><div id="t106" class="t" style="left:928.3px;width:0;display:flex;justify-content:center;top:317.00px;font-size:15px;font-weight:400;color:#1679c0;transform:scaleX(0.9571);transform-origin:center;"><span>00:00</span></div><div id="t107" class="t" style="left:928.3px;width:0;display:flex;justify-content:center;top:341.00px;font-size:15px;font-weight:400;color:#1679c0;transform:scaleX(0.9571);transform-origin:center;"><span>00:00</span></div><div id="t108" class="t" style="left:928.3px;width:0;display:flex;justify-content:center;top:370.00px;font-size:14px;font-weight:400;color:#212121;"><span>-</span></div><div id="t109" class="t" style="left:928.3px;width:0;display:flex;justify-content:center;top:395.00px;font-size:14px;font-weight:400;color:#212121;transform:scaleX(0.9941);transform-origin:center;"><span>0.00</span></div><div id="t110" class="t" style="left:928.3px;width:0;display:flex;justify-content:center;top:423.00px;font-size:13.5px;font-weight:400;color:#212121;transform:scaleX(0.9935);transform-origin:center;"><span>0.00</span></div><div id="t111" class="t" style="left:990.2px;width:0;display:flex;justify-content:center;top:317.00px;font-size:15px;font-weight:400;color:#1679c0;transform:scaleX(0.9571);transform-origin:center;"><span>00:00</span></div><div id="t112" class="t" style="left:990.2px;width:0;display:flex;justify-content:center;top:341.00px;font-size:15px;font-weight:400;color:#1679c0;transform:scaleX(0.9571);transform-origin:center;"><span>00:00</span></div><div id="t113" class="t" style="left:990.2px;width:0;display:flex;justify-content:center;top:370.00px;font-size:14px;font-weight:400;color:#7450b5;transform:scaleX(1.0361);transform-origin:center;"><span>CH</span></div><div id="t114" class="t" style="left:990.2px;width:0;display:flex;justify-content:center;top:395.00px;font-size:14px;font-weight:400;color:#cc3340;transform:scaleX(0.9941);transform-origin:center;"><span>0.00</span></div><div id="t115" class="t" style="left:990.2px;width:0;display:flex;justify-content:center;top:423.00px;font-size:13.5px;font-weight:400;color:#212121;transform:scaleX(0.9935);transform-origin:center;"><span>0.00</span></div><div id="t116" class="t" style="left:1041.4px;width:0;display:flex;justify-content:center;top:317.00px;font-size:15px;font-weight:400;color:#1679c0;transform:scaleX(0.9571);transform-origin:center;"><span>00:00</span></div><div id="t117" class="t" style="left:1041.4px;width:0;display:flex;justify-content:center;top:341.00px;font-size:15px;font-weight:400;color:#1679c0;transform:scaleX(0.9571);transform-origin:center;"><span>00:00</span></div><div id="t118" class="t" style="left:1041.4px;width:0;display:flex;justify-content:center;top:370.00px;font-size:14px;font-weight:400;color:#7450b5;transform:scaleX(1.0361);transform-origin:center;"><span>CH</span></div><div id="t119" class="t" style="left:1041.4px;width:0;display:flex;justify-content:center;top:395.00px;font-size:14px;font-weight:400;color:#cc3340;transform:scaleX(0.9941);transform-origin:center;"><span>0.00</span></div><div id="t120" class="t" style="left:1041.4px;width:0;display:flex;justify-content:center;top:423.00px;font-size:13.5px;font-weight:400;color:#212121;transform:scaleX(0.9935);transform-origin:center;"><span>0.00</span></div><div id="t121" class="t" style="left:1091.7px;width:0;display:flex;justify-content:center;top:317.00px;font-size:15px;font-weight:400;color:#1679c0;transform:scaleX(0.9571);transform-origin:center;"><span>00:00</span></div><div id="t122" class="t" style="left:1091.7px;width:0;display:flex;justify-content:center;top:341.00px;font-size:15px;font-weight:400;color:#1679c0;transform:scaleX(0.9571);transform-origin:center;"><span>00:00</span></div><div id="t123" class="t" style="left:1091.7px;width:0;display:flex;justify-content:center;top:370.00px;font-size:14px;font-weight:400;color:#7450b5;transform:scaleX(1.0361);transform-origin:center;"><span>CH</span></div><div id="t124" class="t" style="left:1091.7px;width:0;display:flex;justify-content:center;top:395.00px;font-size:14px;font-weight:400;color:#cc3340;transform:scaleX(0.9941);transform-origin:center;"><span>0.00</span></div><div id="t125" class="t" style="left:1091.7px;width:0;display:flex;justify-content:center;top:423.00px;font-size:13.5px;font-weight:400;color:#212121;transform:scaleX(0.9935);transform-origin:center;"><span>0.00</span></div><div id="t126" class="t" style="left:1140.9px;width:0;display:flex;justify-content:center;top:317.00px;font-size:15px;font-weight:400;color:#1679c0;transform:scaleX(0.9571);transform-origin:center;"><span>08:00</span></div><div id="t127" class="t" style="left:1140.9px;width:0;display:flex;justify-content:center;top:341.00px;font-size:15px;font-weight:400;color:#1679c0;transform:scaleX(0.9836);transform-origin:center;"><span>16:00</span></div><div id="t128" class="t" style="left:1140.9px;width:0;display:flex;justify-content:center;top:370.00px;font-size:14px;font-weight:400;color:#212121;"><span>-</span></div><div id="t129" class="t" style="left:1140.9px;width:0;display:flex;justify-content:center;top:395.00px;font-size:14px;font-weight:400;color:#cc3340;transform:scaleX(0.9941);transform-origin:center;"><span>8.00</span></div><div id="t130" class="t" style="left:1140.9px;width:0;display:flex;justify-content:center;top:423.00px;font-size:13.5px;font-weight:400;color:#212121;transform:scaleX(0.9935);transform-origin:center;"><span>0.00</span></div><div id="t131" class="t" style="left:1190.8px;width:0;display:flex;justify-content:center;top:317.00px;font-size:15px;font-weight:400;color:#1679c0;transform:scaleX(0.9571);transform-origin:center;"><span>08:00</span></div><div id="t132" class="t" style="left:1190.8px;width:0;display:flex;justify-content:center;top:341.00px;font-size:15px;font-weight:400;color:#1679c0;transform:scaleX(0.9836);transform-origin:center;"><span>16:00</span></div><div id="t133" class="t" style="left:1190.8px;width:0;display:flex;justify-content:center;top:370.00px;font-size:14px;font-weight:400;color:#212121;"><span>-</span></div><div id="t134" class="t" style="left:1190.8px;width:0;display:flex;justify-content:center;top:395.00px;font-size:14px;font-weight:400;color:#cc3340;transform:scaleX(0.9941);transform-origin:center;"><span>8.00</span></div><div id="t135" class="t" style="left:1190.8px;width:0;display:flex;justify-content:center;top:423.00px;font-size:13.5px;font-weight:400;color:#212121;transform:scaleX(0.9935);transform-origin:center;"><span>0.00</span></div><div id="t136" class="t" style="left:1244.8px;width:0;display:flex;justify-content:center;top:317.00px;font-size:15px;font-weight:400;color:#1679c0;transform:scaleX(0.9571);transform-origin:center;"><span>00:00</span></div><div id="t137" class="t" style="left:1244.8px;width:0;display:flex;justify-content:center;top:341.00px;font-size:15px;font-weight:400;color:#1679c0;transform:scaleX(0.9571);transform-origin:center;"><span>00:00</span></div><div id="t138" class="t" style="left:1244.8px;width:0;display:flex;justify-content:center;top:370.00px;font-size:14px;font-weight:400;color:#212121;"><span>-</span></div><div id="t139" class="t" style="left:1244.8px;width:0;display:flex;justify-content:center;top:395.00px;font-size:14px;font-weight:400;color:#212121;transform:scaleX(0.9941);transform-origin:center;"><span>0.00</span></div><div id="t140" class="t" style="left:1244.8px;width:0;display:flex;justify-content:center;top:423.00px;font-size:13.5px;font-weight:400;color:#212121;transform:scaleX(0.9935);transform-origin:center;"><span>0.00</span></div><div id="t141" class="t" style="left:1309.7px;width:0;display:flex;justify-content:center;top:317.00px;font-size:15px;font-weight:400;color:#1679c0;transform:scaleX(0.9571);transform-origin:center;"><span>00:00</span></div><div id="t142" class="t" style="left:1309.7px;width:0;display:flex;justify-content:center;top:341.00px;font-size:15px;font-weight:400;color:#1679c0;transform:scaleX(0.9571);transform-origin:center;"><span>00:00</span></div><div id="t143" class="t" style="left:1309.7px;width:0;display:flex;justify-content:center;top:370.00px;font-size:14px;font-weight:400;color:#212121;"><span>-</span></div><div id="t144" class="t" style="left:1309.7px;width:0;display:flex;justify-content:center;top:395.00px;font-size:14px;font-weight:400;color:#212121;transform:scaleX(0.9941);transform-origin:center;"><span>0.00</span></div><div id="t145" class="t" style="left:1309.7px;width:0;display:flex;justify-content:center;top:423.00px;font-size:13.5px;font-weight:400;color:#212121;transform:scaleX(0.9935);transform-origin:center;"><span>0.00</span></div><div id="t146" class="t" style="left:1371.7px;width:0;display:flex;justify-content:center;top:317.00px;font-size:15px;font-weight:400;color:#1679c0;transform:scaleX(0.9571);transform-origin:center;"><span>08:00</span></div><div id="t147" class="t" style="left:1371.7px;width:0;display:flex;justify-content:center;top:341.00px;font-size:15px;font-weight:400;color:#1679c0;transform:scaleX(0.9836);transform-origin:center;"><span>16:00</span></div><div id="t148" class="t" style="left:1371.7px;width:0;display:flex;justify-content:center;top:370.00px;font-size:14px;font-weight:400;color:#212121;"><span>-</span></div><div id="t149" class="t" style="left:1371.7px;width:0;display:flex;justify-content:center;top:395.00px;font-size:14px;font-weight:400;color:#cc3340;transform:scaleX(0.9941);transform-origin:center;"><span>8.00</span></div><div id="t150" class="t" style="left:1371.7px;width:0;display:flex;justify-content:center;top:423.00px;font-size:13.5px;font-weight:400;color:#212121;transform:scaleX(0.9935);transform-origin:center;"><span>0.00</span></div><div style="position:absolute;left:92px;top:462px;width:1314px;height:1px;background:#d2d2d2;"></div><div id="t151" class="t" style="left:690.95px;top:477.00px;font-size:15px;font-weight:700;color:#0b7dc2;transform:scaleX(0.9199);transform-origin:left;"><span>Wczytaj kolejne...</span></div><div style="position:absolute;left:92px;top:507px;width:1314px;height:1px;background:#cfcfcf;"></div><div style="position:absolute;left:190px;top:512px;width:34px;height:3px;background:#0b7dc2;"></div><svg style="position:absolute;left:114px;top:526px;" width="12" height="13" viewBox="0 0 12 13"><rect x="1.8" y="2" width="1.5" height="9" fill="#c4c4c4"/><path d="M10.2 2v9L4 6.5z" fill="#c4c4c4"/></svg><svg style="position:absolute;left:161px;top:526px;" width="10" height="13" viewBox="0 0 10 13"><path d="M8.5 2v9L2 6.5z" fill="#c4c4c4"/></svg><div id="t152" class="t" style="left:206.3px;width:0;display:flex;justify-content:center;top:526.00px;font-size:15px;font-weight:400;color:#0b7dc2;"><span>1</span></div><svg style="position:absolute;left:245px;top:526px;" width="10" height="13" viewBox="0 0 10 13"><path d="M1.2 2v9l6.5-4.5z" fill="#c4c4c4"/></svg><svg style="position:absolute;left:288px;top:526px;" width="12" height="13" viewBox="0 0 12 13"><path d="M1.8 2v9L8 6.5z" fill="#c4c4c4"/><rect x="8.7" y="2" width="1.5" height="9" fill="#c4c4c4"/></svg><div style="position:absolute;left:328px;top:518px;width:73px;height:31px;box-sizing:border-box;border:1px solid #bdbdbd;border-radius:4px;background:#fff;"></div><div id="t153" class="t" style="left:337.65px;top:525.00px;font-size:15px;font-weight:400;color:#333;transform:scaleX(1.0103);transform-origin:left;"><span>10</span></div><svg style="position:absolute;left:376px;top:528px;" width="15" height="10" viewBox="0 0 15 10"><path d="M2 2.5l5.5 5.2L13 2.5" stroke="#666" stroke-width="1.1" fill="none"/></svg><div id="t154" class="t" style="left:408.15px;top:525.00px;font-size:15px;font-weight:400;color:#212121;transform:scaleX(0.9786);transform-origin:left;"><span>elementów na stronie</span></div><div id="t155" class="t" style="right:75.40000000000009px;top:525.00px;font-size:15px;font-weight:400;color:#212121;transform:scaleX(0.9608);transform-origin:right;"><span>1 - 10 z 10 elementów</span></div><div style="position:absolute;left:92px;top:564px;width:664px;height:1px;background:#dcdcdc;"></div><div style="position:absolute;left:787px;top:564px;width:619px;height:1px;background:#dcdcdc;"></div><svg style="position:absolute;left:762px;top:559px;" width="19" height="12" viewBox="0 0 19 12"><path d="M2.3 2.3l7 7 7-7" stroke="#888" stroke-width="1.1" fill="none"/></svg><div id="t156" class="t" style="left:101.02px;top:586.00px;font-size:14px;font-weight:400;color:#5a5a5a;transform:scaleX(0.9724);transform-origin:left;-webkit-text-stroke:0.3px currentColor;"><span>Wszystkie niezgodności</span></div><div id="t157" class="t" style="left:262.72px;top:586.00px;font-size:14px;font-weight:400;color:#5a5a5a;transform:scaleX(0.9863);transform-origin:left;-webkit-text-stroke:0.3px currentColor;"><span>Niezgodności</span></div><div id="t158" class="t" style="left:362.52px;top:586.00px;font-size:14px;font-weight:400;color:#5a5a5a;transform:scaleX(0.9653);transform-origin:left;-webkit-text-stroke:0.3px currentColor;"><span>Wnioski</span></div><div id="t159" class="t" style="left:426.92px;top:586.00px;font-size:14px;font-weight:400;color:#5a5a5a;transform:scaleX(0.9627);transform-origin:left;-webkit-text-stroke:0.3px currentColor;"><span>Godziny do rozliczenia</span></div><div id="t160" class="t" style="left:579.82px;top:586.00px;font-size:14px;font-weight:400;color:#5a5a5a;transform:scaleX(0.9715);transform-origin:left;-webkit-text-stroke:0.3px currentColor;"><span>Zlecenia nadgodzin</span></div><div id="t161" class="t" style="left:715.02px;top:586.00px;font-size:14px;font-weight:400;color:#5a5a5a;transform:scaleX(0.9958);transform-origin:left;-webkit-text-stroke:0.3px currentColor;"><span>Informacje</span></div><div id="t162" class="t" style="left:796.82px;top:586.00px;font-size:14px;font-weight:400;color:#212121;transform:scaleX(0.9596);transform-origin:left;-webkit-text-stroke:0.3px currentColor;"><span>Epizody kalendarza</span></div><div style="position:absolute;left:92px;top:611px;width:1314px;height:1px;background:#dcdcdc;"></div><div style="position:absolute;left:788px;top:609px;width:135px;height:3px;background:#0b7dc2;"></div><div style="position:absolute;left:92px;top:625px;width:87px;height:32px;background:#e6e6e6;border-radius:5px;"></div><svg style="position:absolute;left:101px;top:629px;" width="23" height="23" viewBox="0 0 23 23"><g stroke="#444" stroke-width="1.2" fill="none" stroke-linecap="round" stroke-linejoin="round"><circle cx="11.3" cy="11.4" r="10"/><path d="M11.3 6v10.8M5.9 11.4h10.8"/></g></svg><div id="t163" class="t" style="left:127.65px;top:633.00px;font-size:15px;font-weight:400;color:#424242;transform:scaleX(0.9694);transform-origin:left;-webkit-text-stroke:0.3px currentColor;"><span>Dodaj</span></div><div style="position:absolute;left:186px;top:625px;width:89px;height:32px;background:#e6e6e6;border-radius:5px;"></div><svg style="position:absolute;left:196px;top:630px;" width="22" height="22" viewBox="0 0 22 22"><g stroke="#444" stroke-width="1.2" fill="none" stroke-linecap="round" stroke-linejoin="round"><path d="M1.5 20.3l1.3-5.2L15.6 2.3c.8-.8 1.9-.8 2.7 0l1.2 1.2c.8.8.8 1.9 0 2.7L6.7 19z"/><path d="M2.8 15.1l3.9 3.9M14 4l4 4"/></g></svg><div id="t164" class="t" style="left:221.45px;top:633.00px;font-size:15px;font-weight:400;color:#424242;transform:scaleX(0.9689);transform-origin:left;-webkit-text-stroke:0.3px currentColor;"><span>Edytuj</span></div><div style="position:absolute;left:283px;top:625px;width:97px;height:32px;background:#e6e6e6;border-radius:5px;"></div><svg style="position:absolute;left:291px;top:628px;" width="26" height="26" viewBox="0 0 26 26"><g stroke="#444" stroke-width="1.2" fill="none" stroke-linecap="round" stroke-linejoin="round"><path d="M9.5 22.7H4.2c-1.2 0-2-.8-2-2V4.2c0-1.2.8-2 2-2h15.4c1.2 0 2 .8 2 2v10.3"/><circle cx="17.7" cy="19" r="5.5" fill="#e6e6e6"/><path d="M17.7 18v4"/></g><circle cx="17.7" cy="15.9" r=".8" fill="#444"/></svg><div id="t165" class="t" style="left:317.95px;top:633.00px;font-size:15px;font-weight:400;color:#424242;transform:scaleX(0.9735);transform-origin:left;-webkit-text-stroke:0.3px currentColor;"><span>Zobacz</span></div><div style="position:absolute;left:387px;top:625px;width:83px;height:32px;background:#e6e6e6;border-radius:5px;"></div><svg style="position:absolute;left:397px;top:628px;" width="22" height="25" viewBox="0 0 22 25"><g stroke="#444" stroke-width="1.2" fill="none" stroke-linecap="round" stroke-linejoin="round"><path d="M3.2 6.5h15.6v-1c0-1-.6-1.6-1.6-1.6H13.5v-1.4c0-.6-.4-1-1-1H9.5c-.6 0-1 .4-1 1v1.4H4.8c-1 0-1.6.6-1.6 1.6z"/><path d="M4.3 6.5l.8 15.6c0 .8.5 1.3 1.2 1.3h9.4c.7 0 1.2-.5 1.2-1.3l.8-15.6"/></g><g stroke="#666" stroke-width=".8"><path d="M7.6 10v10.5M9.5 10v10.5M11.4 10v10.5M13.3 10v10.5M15.2 10v10.5"/></g></svg><div id="t166" class="t" style="left:422.45px;top:633.00px;font-size:15px;font-weight:400;color:#424242;transform:scaleX(0.9592);transform-origin:left;-webkit-text-stroke:0.3px currentColor;"><span>Usuń</span></div><div style="position:absolute;left:1218px;top:625px;width:89px;height:32px;background:#e6e6e6;border-radius:5px;"></div><svg style="position:absolute;left:1228px;top:630px;" width="22" height="22" viewBox="0 0 22 22"><g stroke="#444" stroke-width="1.2" fill="none" stroke-linecap="round" stroke-linejoin="round"><path d="M1.2 1.5h18.6l-7.4 8.6v8.3l-2.6 1.3v-9.6z"/></g></svg><div id="t167" class="t" style="left:1253.25px;top:633.00px;font-size:15px;font-weight:400;color:#424242;transform:scaleX(1.0387);transform-origin:left;-webkit-text-stroke:0.3px currentColor;"><span>Filtruj</span></div><svg style="position:absolute;left:1325px;top:632px;" width="18" height="18" viewBox="0 0 18 18"><g stroke="#444" stroke-width="1.2" fill="none" stroke-linecap="round" stroke-linejoin="round"><path d="M13.6 3.2A6.8 6.8 0 1 0 15.3 9"/><path d="M14.5 .8v3.4h-3.4" /></g></svg><svg style="position:absolute;left:1373px;top:630px;" width="21" height="21" viewBox="0 0 21 21"><g stroke="#444" stroke-width="1.2" fill="none" stroke-linecap="round" stroke-linejoin="round"><path d="M9.2 1.2h2.6l.5 2.5 1.6.7 2.1-1.4 1.9 1.9-1.4 2.1.7 1.6 2.5.5v2.6l-2.5.5-.7 1.6 1.4 2.1-1.9 1.9-2.1-1.4-1.6.7-.5 2.5H9.2l-.5-2.5-1.6-.7-2.1 1.4-1.9-1.9 1.4-2.1-.7-1.6-2.5-.5V9.2l2.5-.5.7-1.6-1.4-2.1 1.9-1.9 2.1 1.4 1.6-.7z"/><circle cx="10.5" cy="10.5" r="3.2"/></g></svg><div style="position:absolute;left:92px;top:668px;width:1314px;height:1px;background:#e0e0e0;"></div><div style="position:absolute;left:92px;top:669px;width:1314px;height:57px;background:#fafafa;"></div><div style="position:absolute;left:92px;top:726px;width:1314px;height:2px;background:#dedede;"></div><div style="position:absolute;left:141px;top:669px;width:1px;height:57px;background:#e0e0e0;"></div><div style="position:absolute;left:267px;top:669px;width:1px;height:57px;background:#e0e0e0;"></div><div style="position:absolute;left:602px;top:669px;width:1px;height:57px;background:#e0e0e0;"></div><div style="position:absolute;left:805px;top:669px;width:1px;height:57px;background:#e0e0e0;"></div><div style="position:absolute;left:1217px;top:669px;width:1px;height:57px;background:#e0e0e0;"></div><div style="position:absolute;left:703px;top:697px;width:1px;height:29px;background:#e0e0e0;"></div><div style="position:absolute;left:602px;top:697px;width:203px;height:1px;background:#e0e0e0;"></div><div style="position:absolute;left:108px;top:689px;width:18px;height:18px;box-sizing:border-box;border:1px solid #b5b5b5;border-radius:3px;background:#fff;"></div><div id="t168" class="t" style="left:154.75px;top:690.00px;font-size:15px;font-weight:400;color:#212121;transform:scaleX(0.9316);transform-origin:left;-webkit-text-stroke:0.3px currentColor;"><span>Data</span></div><div id="t169" class="t" style="left:281.55px;top:690.00px;font-size:15px;font-weight:400;color:#212121;transform:scaleX(0.9656);transform-origin:left;-webkit-text-stroke:0.3px currentColor;"><span>Rodzaj</span></div><div id="t170" class="t" style="left:614.75px;top:676.00px;font-size:15px;font-weight:400;color:#212121;transform:scaleX(0.9476);transform-origin:left;-webkit-text-stroke:0.3px currentColor;"><span>Godz</span></div><div id="t171" class="t" style="left:614.75px;top:705.00px;font-size:15px;font-weight:400;color:#212121;transform:scaleX(0.9152);transform-origin:left;-webkit-text-stroke:0.3px currentColor;"><span>Od</span></div><svg style="position:absolute;left:684px;top:706px;" width="13" height="13" viewBox="0 0 13 13"><g stroke="#5cb85c" stroke-width="1.3" fill="none"><path d="M6.5 11.3V1.8M2 6.2l4.5-4.5 4.5 4.5"/></g></svg><div id="t172" class="t" style="left:716.95px;top:705.00px;font-size:15px;font-weight:400;color:#212121;transform:scaleX(0.9645);transform-origin:left;-webkit-text-stroke:0.3px currentColor;"><span>Do</span></div><div id="t173" class="t" style="left:818.55px;top:690.00px;font-size:15px;font-weight:400;color:#212121;transform:scaleX(0.9841);transform-origin:left;-webkit-text-stroke:0.3px currentColor;"><span>MPK</span></div><div id="t174" class="t" style="left:1231.95px;top:676.00px;font-size:15px;font-weight:400;color:#212121;transform:scaleX(0.9807);transform-origin:left;-webkit-text-stroke:0.3px currentColor;"><span>Rozpoczęcie</span></div><div id="t175" class="t" style="left:1231.95px;top:705.00px;font-size:15px;font-weight:400;color:#212121;transform:scaleX(0.9748);transform-origin:left;-webkit-text-stroke:0.3px currentColor;"><span>w następnym dniu</span></div><div style="position:absolute;left:92px;top:728px;width:1314px;height:39px;background:#dff3fa;"></div><div style="position:absolute;left:92px;top:728px;width:1314px;height:1px;background:#9fd9f0;"></div><div style="position:absolute;left:92px;top:766px;width:1314px;height:1px;background:#9fd9f0;"></div><div style="position:absolute;left:806px;top:728px;width:1px;height:39px;background:#e0e0e0;"></div><div style="position:absolute;left:1217px;top:728px;width:1px;height:39px;background:#e0e0e0;"></div><div style="position:absolute;left:807px;top:728px;width:410px;height:39px;box-sizing:border-box;background:#c4e9f7;border:1px solid #94d6ee;"></div><div style="position:absolute;left:92px;top:767px;width:1314px;height:1px;background:#e6e6e6;"></div><div style="position:absolute;left:92px;top:805px;width:1314px;height:1px;background:#e0e0e0;"></div><div style="position:absolute;left:92px;top:843px;width:1314px;height:1px;background:#e0e0e0;"></div><div style="position:absolute;left:92px;top:880px;width:1314px;height:1px;background:#e0e0e0;"></div><div style="position:absolute;left:108px;top:738px;width:18px;height:18px;box-sizing:border-box;border:1px solid #b5b5b5;border-radius:3px;background:#fff;"></div><div id="t176" class="t" style="left:154.75px;top:739.00px;font-size:15px;font-weight:400;color:#212121;transform:scaleX(0.9728);transform-origin:left;"><span>01.03.2024</span></div><div id="t177" class="t" style="left:281.55px;top:739.00px;font-size:15px;font-weight:400;color:#212121;transform:scaleX(0.9575);transform-origin:left;"><span>Dyzur_dom</span></div><div id="t178" class="t" style="left:614.75px;top:739.00px;font-size:15px;font-weight:400;color:#212121;transform:scaleX(0.9464);transform-origin:left;"><span>07:00</span></div><div id="t179" class="t" style="left:717.45px;top:739.00px;font-size:15px;font-weight:400;color:#212121;transform:scaleX(0.9725);transform-origin:left;"><span>12:30</span></div><svg style="position:absolute;left:1307.4px;top:737.6px;" width="18" height="18" viewBox="0 0 18 18"><circle cx="9" cy="9" r="8.6" fill="#0b7dc2"/><path d="M5.2 9.3l2.6 2.5 5-5" stroke="#fff" stroke-width="1.4" fill="none"/></svg><div style="position:absolute;left:108px;top:777px;width:18px;height:18px;box-sizing:border-box;border:1px solid #b5b5b5;border-radius:3px;background:#fff;"></div><div id="t180" class="t" style="left:154.75px;top:777.00px;font-size:15px;font-weight:400;color:#212121;transform:scaleX(0.9860);transform-origin:left;"><span>14.03.2024</span></div><div id="t181" class="t" style="left:281.55px;top:777.00px;font-size:15px;font-weight:400;color:#212121;transform:scaleX(0.9520);transform-origin:left;"><span>Przerwa_platna</span></div><div id="t182" class="t" style="left:614.75px;top:777.00px;font-size:15px;font-weight:400;color:#212121;transform:scaleX(1.0034);transform-origin:left;"><span>11:00</span></div><div id="t183" class="t" style="left:717.45px;top:777.00px;font-size:15px;font-weight:400;color:#212121;transform:scaleX(0.9725);transform-origin:left;"><span>16:00</span></div><div id="t184" class="t" style="left:818.55px;top:777.00px;font-size:15px;font-weight:400;color:#212121;transform:scaleX(0.9966);transform-origin:left;"><span>1003985417</span></div><svg style="position:absolute;left:1307.4px;top:776.4px;" width="18" height="18" viewBox="0 0 18 18"><circle cx="9" cy="9" r="8.6" fill="#cdcdcd"/><path d="M5.8 5.8l6.4 6.4M12.2 5.8l-6.4 6.4" stroke="#fff" stroke-width="1.3" fill="none"/></svg><div style="position:absolute;left:108px;top:815px;width:18px;height:18px;box-sizing:border-box;border:1px solid #b5b5b5;border-radius:3px;background:#fff;"></div><div id="t185" class="t" style="left:154.75px;top:816.00px;font-size:15px;font-weight:400;color:#212121;transform:scaleX(0.9728);transform-origin:left;"><span>29.03.2024</span></div><div id="t186" class="t" style="left:281.55px;top:816.00px;font-size:15px;font-weight:400;color:#212121;transform:scaleX(0.9328);transform-origin:left;"><span>Dyzur_praca</span></div><div id="t187" class="t" style="left:614.75px;top:816.00px;font-size:15px;font-weight:400;color:#212121;transform:scaleX(0.9464);transform-origin:left;"><span>09:00</span></div><div id="t188" class="t" style="left:717.45px;top:816.00px;font-size:15px;font-weight:400;color:#212121;transform:scaleX(0.9725);transform-origin:left;"><span>10:30</span></div><svg style="position:absolute;left:1307.4px;top:814.4px;" width="18" height="18" viewBox="0 0 18 18"><circle cx="9" cy="9" r="8.6" fill="#cdcdcd"/><path d="M5.8 5.8l6.4 6.4M12.2 5.8l-6.4 6.4" stroke="#fff" stroke-width="1.3" fill="none"/></svg><div style="position:absolute;left:108px;top:852px;width:18px;height:18px;box-sizing:border-box;border:1px solid #b5b5b5;border-radius:3px;background:#fff;"></div><div id="t189" class="t" style="left:154.75px;top:853.00px;font-size:15px;font-weight:400;color:#212121;transform:scaleX(0.9728);transform-origin:left;"><span>29.03.2024</span></div><div id="t190" class="t" style="left:281.55px;top:853.00px;font-size:15px;font-weight:400;color:#212121;transform:scaleX(0.9588);transform-origin:left;"><span>Przerwa_nieplatna</span></div><div id="t191" class="t" style="left:614.75px;top:853.00px;font-size:15px;font-weight:400;color:#212121;transform:scaleX(0.9725);transform-origin:left;"><span>14:30</span></div><div id="t192" class="t" style="left:717.45px;top:853.00px;font-size:15px;font-weight:400;color:#212121;transform:scaleX(0.9725);transform-origin:left;"><span>16:00</span></div><svg style="position:absolute;left:1307.4px;top:852.7px;" width="18" height="18" viewBox="0 0 18 18"><circle cx="9" cy="9" r="8.6" fill="#cdcdcd"/><path d="M5.8 5.8l6.4 6.4M12.2 5.8l-6.4 6.4" stroke="#fff" stroke-width="1.3" fill="none"/></svg></div>
</body></html>
